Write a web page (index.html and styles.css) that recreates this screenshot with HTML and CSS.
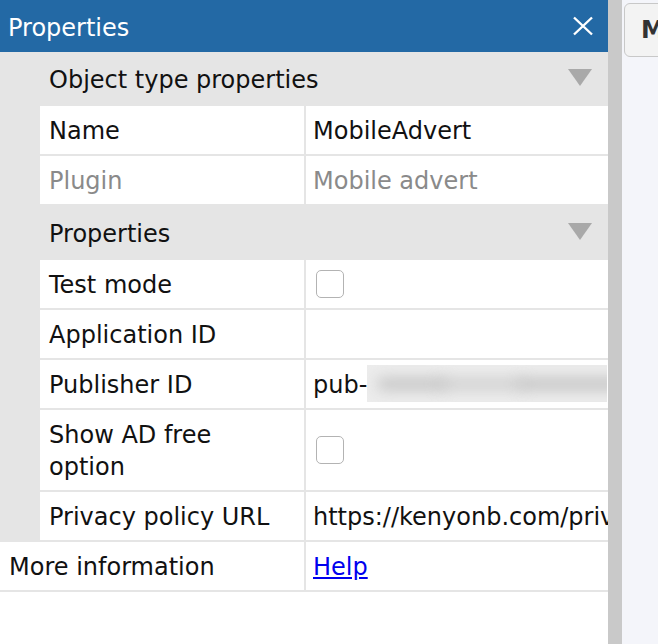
FILE: index.html
```
<!DOCTYPE html>
<html>
<head>
<meta charset="utf-8">
<link rel="stylesheet" href="styles.css">
</head>
<body>
<div class="app">
  <div class="panel">
    <div class="titlebar">
      <span class="title">Properties</span>
      <svg class="close" width="22" height="20" viewBox="0 0 22 20"><path d="M2 1.5 L20 18.5 M20 1.5 L2 18.5" stroke="#fff" stroke-width="2.4" fill="none"/></svg>
    </div>
    <div class="body">
      <div class="section"><span>Object type properties</span><span class="tri"></span></div>
      <div class="row indent"><div class="label">Name</div><div class="value">MobileAdvert</div></div>
      <div class="row indent muted"><div class="label">Plugin</div><div class="value">Mobile advert</div></div>
      <div class="section"><span>Properties</span><span class="tri"></span></div>
      <div class="row indent"><div class="label">Test mode</div><div class="value"><span class="check"></span></div></div>
      <div class="row indent"><div class="label">Application ID</div><div class="value"></div></div>
      <div class="row indent"><div class="label">Publisher ID</div><div class="value">pub-<span class="blur"><span class="blob b1"></span><span class="blob b2"></span><span class="blob b3"></span></span></div></div>
      <div class="row indent tall"><div class="label">Show AD free<br>option</div><div class="value"><span class="check"></span></div></div>
      <div class="row indent"><div class="label">Privacy policy URL</div><div class="value">https://kenyonb.com/privacy-policy</div></div>
      <div class="row full"><div class="label">More information</div><div class="value"><a href="#" class="link">Help</a></div></div>
    </div>
  </div>
  <div class="splitter"></div>
  <div class="side">
    <div class="tab">M</div>
  </div>
</div>
</body>
</html>
```
FILE: styles.css
```
html, body {
  margin: 0;
  padding: 0;
  height: 100%;
}
body {
  font-family: "DejaVu Sans", "Liberation Sans", sans-serif;
  font-size: 24px;
  color: #111;
  overflow: hidden;
}
.app {
  display: flex;
  height: 644px;
  width: 658px;
}
.panel {
  width: 608px;
  flex: none;
  display: flex;
  flex-direction: column;
  background: #fff;
}
.titlebar {
  height: 52px;
  background: #2369a5;
  color: #fff;
  display: flex;
  align-items: center;
  justify-content: space-between;
  padding: 0 14px 0 8px;
  box-sizing: border-box;
}
.title {
  font-size: 24px;
  line-height: 1;
  margin-top: 3px;
}
.close {
  display: block;
  margin-top: -1px;
}
.body {
  display: flex;
  flex-direction: column;
  overflow: hidden;
}
.section {
  height: 54px;
  background: #e5e5e5;
  display: flex;
  align-items: center;
  justify-content: space-between;
  padding: 2px 16px 0 49px;
  box-sizing: border-box;
}
.tri {
  width: 0;
  height: 0;
  border-left: 12px solid transparent;
  border-right: 12px solid transparent;
  border-top: 17px solid #a9a9a9;
  margin-top: -6px;
}
.row {
  display: flex;
  height: 50px;
  box-sizing: border-box;
  border-bottom: 2px solid #e5e5e5;
  background: #fff;
}
.row.indent {
  border-left: 40px solid #e5e5e5;
}
.row.tall {
  height: 82px;
}
.label {
  width: 266px;
  flex: none;
  box-sizing: border-box;
  padding: 2px 0 0 9px;
  border-right: 2px solid #e5e5e5;
  display: flex;
  align-items: center;
  line-height: 32px;
}
.row.full .label {
  width: 306px;
}
.value {
  flex: 1;
  min-width: 0;
  display: flex;
  align-items: center;
  padding: 2px 0 0 7px;
  white-space: nowrap;
  overflow: hidden;
}
.muted {
  color: #8a8a8a;
}
.check {
  width: 26px;
  height: 26px;
  margin: -2px 0 0 3px;
  border: 1px solid #b3b3b3;
  border-radius: 5px;
  background: #fff;
  flex: none;
}
.blur {
  position: relative;
  flex: none;
  width: 240px;
  height: 37px;
  margin-top: -4px;
  background: #ececec;
  overflow: hidden;
}
.blob {
  position: absolute;
  top: 13px;
  height: 12px;
  background: #c4c4c4;
  border-radius: 8px;
  filter: blur(7px);
}
.b1 { left: 10px; width: 70px; }
.b2 { left: 70px; width: 90px; opacity: 0.7; }
.b3 { left: 150px; width: 110px; }
.link {
  color: #0000ee;
  text-decoration: underline;
}
.splitter {
  width: 14px;
  flex: none;
  background: #c9c9c9;
}
.side {
  flex: 1;
  background: #f4f5fa;
  padding: 3px 0 0 2px;
  overflow: hidden;
}
.tab {
  width: 60px;
  height: 54px;
  box-sizing: border-box;
  border: 1px solid #c8c8c8;
  border-radius: 6px;
  background: #f3f3f3;
  font-family: "DejaVu Sans", sans-serif;
  font-weight: bold;
  color: #333;
  font-size: 24px;
  display: flex;
  align-items: center;
  padding-left: 16px;
}
```
